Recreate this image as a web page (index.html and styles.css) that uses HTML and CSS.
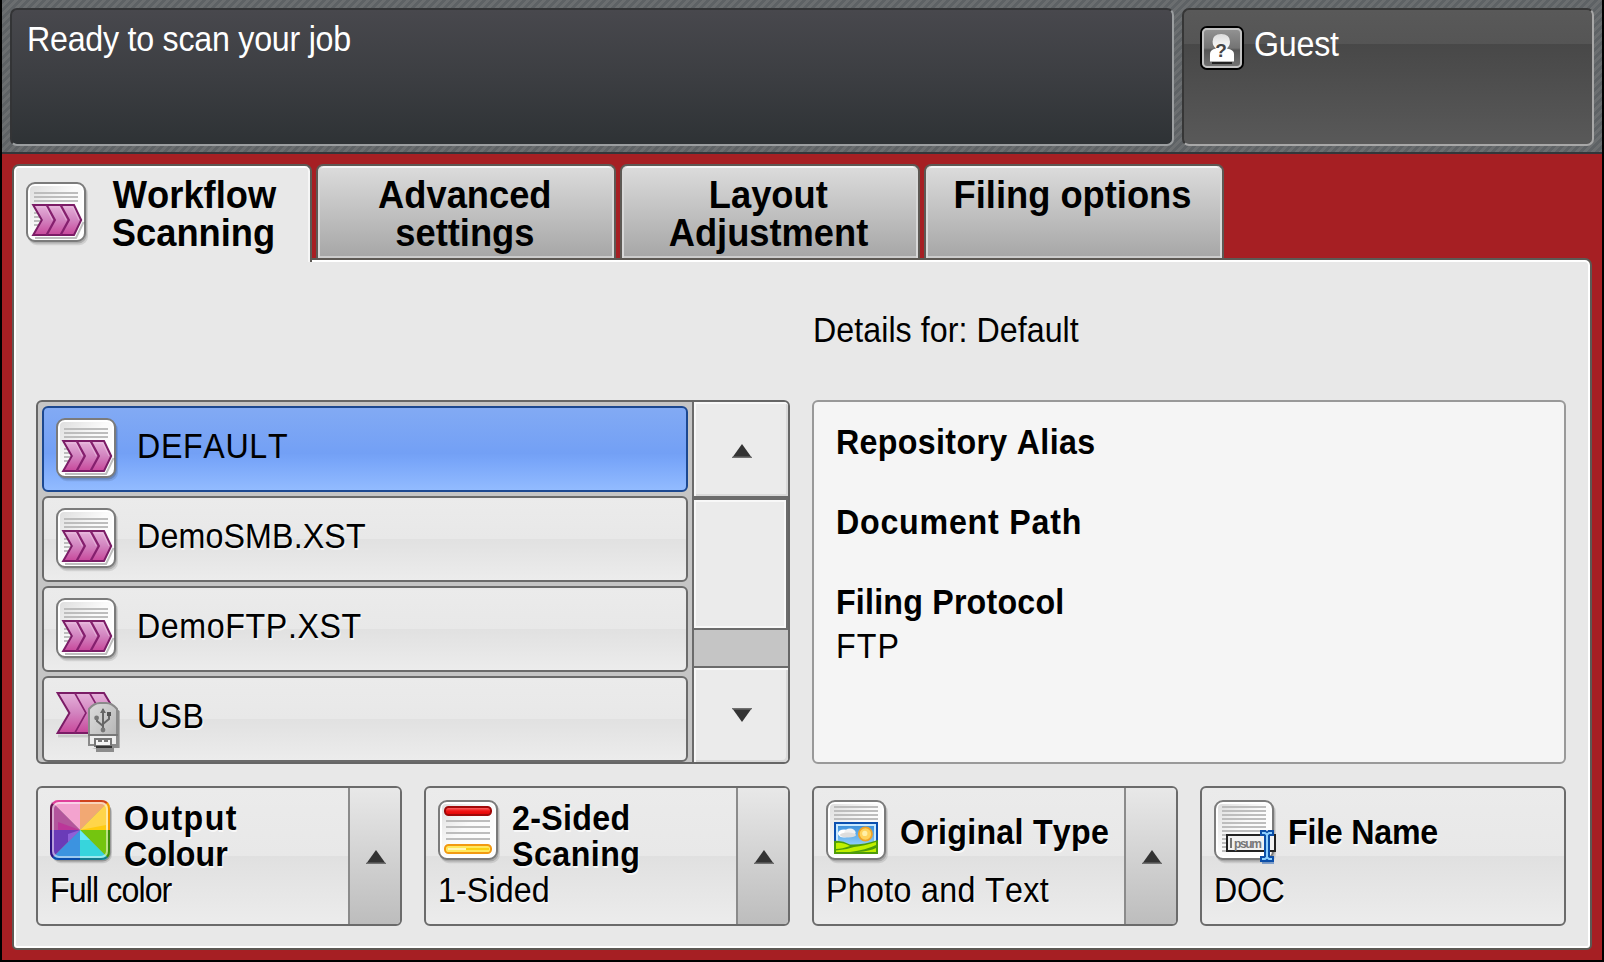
FILE: index.html
```html
<!DOCTYPE html>
<html lang="en">
<head>
<meta charset="utf-8">
<title>Workflow Scanning</title>
<link rel="stylesheet" href="styles.css">
</head>
<body>
<svg class="defs" width="0" height="0">
  <defs>
    <linearGradient id="paper" x1="0" y1="0" x2="1" y2="1"><stop offset="0" stop-color="#dedede"/><stop offset=".45" stop-color="#fafafa"/><stop offset="1" stop-color="#fff"/></linearGradient>
    <linearGradient id="pink" x1="0" y1="0" x2="0" y2="1"><stop offset="0" stop-color="#e5b2da"/><stop offset=".5" stop-color="#d283bf"/><stop offset="1" stop-color="#c8489b"/></linearGradient>
    <linearGradient id="red" x1="0" y1="0" x2="0" y2="1"><stop offset="0" stop-color="#ff7b7b"/><stop offset=".5" stop-color="#f01515"/><stop offset="1" stop-color="#e00000"/></linearGradient>
    <linearGradient id="metal" x1="0" y1="0" x2="1" y2="1"><stop offset="0" stop-color="#dcdcdc"/><stop offset=".5" stop-color="#c8c8c8"/><stop offset="1" stop-color="#b0b0b0"/></linearGradient>
    <linearGradient id="sky" x1="0" y1="0" x2="0" y2="1"><stop offset="0" stop-color="#3f92dc"/><stop offset="1" stop-color="#9dd8ff"/></linearGradient>
    <linearGradient id="badge" x1="0" y1="0" x2="0" y2="1"><stop offset="0" stop-color="#969696"/><stop offset=".5" stop-color="#747474"/><stop offset=".55" stop-color="#555"/><stop offset="1" stop-color="#777"/></linearGradient>
    <linearGradient id="person" x1="0" y1="0" x2="0" y2="1"><stop offset="0" stop-color="#dcdcdc"/><stop offset=".6" stop-color="#fff"/></linearGradient>
    <clipPath id="tile"><rect width="30" height="30" rx="4"/></clipPath>
    <g id="page">
      <rect x="1" y="1.6" width="30" height="30" rx="4.5" fill="#000" opacity=".1"/>
      <rect x=".8" y="1" width="29.6" height="29.8" rx="4.5" fill="#000" opacity=".16"/>
      <rect x=".5" y=".5" width="29" height="29" rx="4" fill="#fff" stroke="#7b7b7b"/>
      <rect x="2" y="2" width="26" height="26" rx="2" fill="url(#paper)"/>
    </g>
    <symbol id="workflow" viewBox="0 0 32 32">
      <use href="#page"/>
      <path d="M4 5.5H26M4 7.5H26M4 9.5H26M4 15.5H9M4 17.5H9M4 19.5H9M4 21.5H9" stroke="#bdbdbd"/>
      <path d="M4.5 28H25L28.8 20" fill="none" stroke="#000" opacity=".25"/>
      <path d="M3.6 11.5H24L27.6 19L24 26.5H3.6L7.9 19Z" fill="url(#pink)" stroke="#7b1c66"/>
      <path d="M10.3 11.5L14.4 19L10.3 26.5M17.3 11.5L21.4 19L17.3 26.5" fill="none" stroke="#85206e" stroke-width="1.15"/>
      <path d="M5.3 12.5H10L13.2 19M11.8 12.5H16.8L20.2 19M18.8 12.5H23.5L26.5 19" fill="none" stroke="#f0cbe8" stroke-width=".6" opacity=".5"/>
    </symbol>
    <symbol id="usb" viewBox="0 0 32 32">
      <path d="M1 22H17" stroke="#000" opacity=".12" stroke-width="1.4"/>
      <path d="M.8 .5H24L30 10.5L24 20.5H.8L6.7 10.5Z" fill="url(#pink)" stroke="#7b1c66"/>
      <path d="M9.4 .5L15 10.5L9.4 20.5M16.8 .5L22.6 10.5L17 20.5" fill="none" stroke="#85206e" stroke-width=".8"/>
      <path d="M18 28.200h2v1.800h9v-2h2.800V9.500L28 6.500v20" fill="#8c8c8c"/>
      <path d="M16.500 26.500V8.500Q19 5.500 22 5.500H25Q28 5.500 30.500 8.500V26.500Z" fill="url(#metal)" stroke="#8a8a8a"/>
      <rect x="17" y="22" width="13" height="4" fill="#eee"/>
      <path d="M16 21.500H31" stroke="#777"/>
      <path d="M19.500 23.500H27.500V27H19.500Z" fill="#f4f4f4" stroke="#777"/>
      <path d="M21 24.500H23M24 24.500H26" stroke="#777"/>
      <path d="M20 27.500H28" stroke="#333"/>
      <path d="M23.500 8.500V19.500M23.500 17L20.500 14.500V13M23.500 16L26.500 13.500V11" fill="none" stroke="#666"/>
      <path d="M22 10.500L23.500 8L25 10.500Z" fill="#666"/><rect x="25.500" y="10" width="2" height="2" fill="#555"/><circle cx="20.300" cy="13" r="1.200" fill="#777"/><circle cx="23.500" cy="19" r="1.200" fill="#777"/>
    </symbol>
    <symbol id="colour" viewBox="0 0 32 32">
      <rect x="1" y="1.600" width="30" height="30" rx="4.500" fill="#000" opacity=".12"/>
      <rect x=".8" y="1" width="29.800" height="29.800" rx="4.500" fill="#000" opacity=".25"/>
      <g clip-path="url(#tile)">
        <path d="M15 15V0H0Z" fill="#f3a3cf"/><path d="M15 15V0H30Z" fill="#f2a873"/>
        <path d="M15 15L30 0V15Z" fill="#ffd54a"/><path d="M15 15H30V30Z" fill="#74c50f"/>
        <path d="M15 15L30 30H15Z" fill="#37d5dc"/><path d="M15 15V30H0Z" fill="#3c93e0"/>
        <path d="M15 15L0 30V15Z" fill="#6a3bb8"/><path d="M15 15H0V0Z" fill="#b3559c"/>
        <path d="M15 15L4 15V11Z" fill="#c41a96" opacity=".5"/><path d="M15 15H28V12.500Z" fill="#ffc800" opacity=".8"/>
        <path d="M15 15L9 21V17Z" fill="#a678ee" opacity=".6"/><path d="M15 15L20 20H15Z" fill="#7ff4ff" opacity=".7"/>
      </g>
      <g fill="none">
        <path d="M.5 15V4.500Q.5 2.500 2 1.500" stroke="#65164f"/><path d="M1.500 2Q2.500 .5 4.500 .5H15" stroke="#e0409a"/>
        <path d="M15 .5H25.500Q27.500 .5 28.500 1.700" stroke="#d0431c"/><path d="M28.500 1.500Q29.500 2.500 29.500 4.500V15" stroke="#f39a00"/>
        <path d="M29.500 15V25.500Q29.500 27.500 28.500 28.500" stroke="#3c8a0c"/><path d="M28.500 28.500Q27.500 29.500 25.500 29.500H15" stroke="#167c8c"/>
        <path d="M15 29.500H4.500Q2.500 29.500 1.500 28.500" stroke="#0a4cab"/><path d="M1.500 28.500Q.5 27.500 .5 25.500V15" stroke="#2c1280"/>
        <rect x="1.500" y="1.500" width="27" height="27" rx="3" stroke="#fff" opacity=".5"/>
      </g>
    </symbol>
    <symbol id="sides" viewBox="0 0 32 32">
      <use href="#page"/>
      <path d="M4 10.500H26M4 13.500H26M4 16.500H26M4 19.500H26" stroke="#bdbdbd"/>
      <rect x="3.500" y="3.500" width="23" height="4" rx="1.800" fill="url(#red)" stroke="#a00808"/>
      <rect x="3.500" y="22.500" width="23" height="4" rx="1.800" fill="#ffe85e" stroke="#f29a12"/>
      <path d="M5 24.500H14" stroke="#fff7b8"/><path d="M14 24.500H25.500" stroke="#fbd215"/>
    </symbol>
    <symbol id="photo" viewBox="0 0 32 32">
      <use href="#page"/>
      <path d="M4 3.500H26M4 5.500H26M4 7.500H26M4 9.500H26" stroke="#bdbdbd"/>
      <rect x="4" y="11" width="22" height="16" fill="#0b50b0"/>
      <rect x="5" y="12" width="20" height="11" fill="#c8e9ff"/>
      <rect x="6" y="13" width="18" height="11" fill="url(#sky)"/>
      <path d="M4 20.500Q8 20 12 22.200Q18 22.600 26 20V27H4Z" fill="#4d9c0a"/>
      <path d="M5 21.500Q8 21 12 23Q8 24.500 5 24.500ZM14 23.500Q19 23 25 21V22.500Q20 25 12 26H5V25.300Q10 25 14 23.500ZM25 24V26H16Q22 25.600 25 24Z" fill="#c0f000"/>
      <ellipse cx="9" cy="16.700" rx="3" ry="2" fill="#fff"/><ellipse cx="12" cy="16.200" rx="2.800" ry="1.900" fill="#f1f1f1"/><ellipse cx="11" cy="17.500" rx="4" ry="1.300" fill="#ddd"/>
      <circle cx="19.700" cy="17" r="3.300" fill="#ffd35c" stroke="#eea32a" stroke-width=".9"/><circle cx="19.400" cy="16.700" r="1.300" fill="#fff0a8"/>
    </symbol>
    <symbol id="filename" viewBox="0 0 32 32">
      <use href="#page"/>
      <path d="M4 3.500H26M4 5.500H26M4 7.500H26M4 9.500H26M4 11.500H26M4 13.500H26M4 15.500H26M4 17.500H6M4 19.500H6M4 21.500H6M4 23.500H6M4 25.500H6" stroke="#bdbdbd"/>
      <rect x="6.500" y="17.500" width="24" height="8" fill="#f1f1f1" stroke="#222"/>
      <path d="M8.500 19V24" stroke="#555" stroke-width=".8"/>
      <text x="10" y="23.900" class="tiny" textLength="14">psum</text>
      <path d="M24 31.500H30" stroke="#0b50b0" opacity=".45"/>
      <path d="M23 15H26L26.500 15.800L27 15H30V18H28V28H30V31H23V28H25V18H23Z" fill="#0b4ea8"/>
      <path d="M24 16.500H25.500L26.500 17.300L27.500 16.500H29M26.500 17V29M24 29.500H25.500L26.500 28.700L27.500 29.500H29" stroke="#8ccfff" fill="none"/>
    </symbol>
    <symbol id="guest" viewBox="0 0 22 22">
      <rect x=".5" y=".5" width="21" height="21" rx="3" fill="url(#badge)" stroke="#000"/>
      <rect x="1.500" y="1.500" width="19" height="19" rx="2" fill="none" stroke="#c2c2c2"/>
      <path d="M6 18.500H16" stroke="#222"/>
      <path d="M5 17.800V14Q5 12 8 11.300Q6.300 10 6.300 7.800Q6.300 4 10.600 4T15 7.800Q15 10 13.400 11.300Q17 12 17 14V17.800Z" fill="url(#person)"/>
      <text x="10.500" y="15.300" class="question">?</text>
    </symbol>
    <symbol id="up" viewBox="0 0 10 7"><path d="M5 0L10 7H0Z" fill="#333"/><path d="M.3 6.600H9.700" stroke="#707070" stroke-width=".8"/></symbol>
    <symbol id="down" viewBox="0 0 10 7"><path d="M0 0H10L5 7Z" fill="#333"/><path d="M.3 .4H9.700" stroke="#707070" stroke-width=".8"/></symbol>
  </defs>
</svg>
<div class="screen">
  <header class="topbar">
    <div class="status"><span class="label ready">Ready to scan your job</span></div>
    <div class="user"><svg class="user-icon"><use href="#guest"/></svg><span class="label guest">Guest</span></div>
  </header>
  <main class="workspace">
    <nav class="tabs">
      <div class="tab active"><svg class="icon"><use href="#workflow"/></svg><div class="tab-text"><span>Workflow</span><span>Scanning</span></div></div>
      <div class="tab"><span>Advanced</span><span>settings</span></div>
      <div class="tab"><span>Layout</span><span>Adjustment</span></div>
      <div class="tab"><span>Filing options</span></div>
    </nav>
    <section class="panel">
      <div class="caption"><span class="label details-for">Details for: Default</span></div>
      <div class="columns">
        <div class="list">
          <div class="rows">
            <div class="row selected"><svg class="icon"><use href="#workflow"/></svg><span class="label r1">DEFAULT</span></div>
            <div class="row"><svg class="icon"><use href="#workflow"/></svg><span class="label r2">DemoSMB.XST</span></div>
            <div class="row"><svg class="icon"><use href="#workflow"/></svg><span class="label r3">DemoFTP.XST</span></div>
            <div class="row"><svg class="icon usb"><use href="#usb"/></svg><span class="label r4">USB</span></div>
          </div>
          <div class="scroller">
            <div class="scroll-button"><svg class="arrow"><use href="#up"/></svg></div>
            <div class="thumb"></div>
            <div class="track"></div>
            <div class="scroll-button last"><svg class="arrow"><use href="#down"/></svg></div>
          </div>
        </div>
        <div class="details">
          <div class="field"><span class="label strong d1">Repository Alias</span></div>
          <div class="field"><span class="label strong d2">Document Path</span></div>
          <div class="field"><span class="label strong d3">Filing Protocol</span><span class="label value ftp">FTP</span></div>
        </div>
      </div>
      <div class="options">
        <div class="option">
          <div class="option-main"><div class="option-head"><svg class="icon"><use href="#colour"/></svg><div class="option-title"><span class="label strong o1">Output</span><span class="label strong">Colour</span></div></div><span class="label full">Full color</span></div>
          <div class="option-more"><svg class="arrow"><use href="#up"/></svg></div>
        </div>
        <div class="option">
          <div class="option-main"><div class="option-head"><svg class="icon"><use href="#sides"/></svg><div class="option-title"><span class="label strong o3">2-Sided</span><span class="label strong o4">Scaning</span></div></div><span class="label one">1-Sided</span></div>
          <div class="option-more"><svg class="arrow"><use href="#up"/></svg></div>
        </div>
        <div class="option">
          <div class="option-main"><div class="option-head"><svg class="icon"><use href="#photo"/></svg><div class="option-title single"><span class="label strong o5">Original Type</span></div></div><span class="label pt">Photo and Text</span></div>
          <div class="option-more"><svg class="arrow"><use href="#up"/></svg></div>
        </div>
        <div class="option">
          <div class="option-main"><div class="option-head"><svg class="icon"><use href="#filename"/></svg><div class="option-title single"><span class="label strong o6">File Name</span></div></div><span class="label doc">DOC</span></div>
        </div>
      </div>
    </section>
  </main>
</div>
</body>
</html>
```

FILE: styles.css
```css
* { box-sizing: border-box; }
html { overflow: hidden; }
body { margin: 0; background: #000; font-family: "Liberation Sans", Arial, sans-serif; font-kerning: none; color: #000; }
.defs { position: absolute; }
.screen { width: 1604px; height: 962px; border: solid #000; border-width: 0 2px 2px; display: flex; flex-direction: column; overflow: hidden; background: #a61f23; }

.label { display: block; width: max-content; font-size: 35px; line-height: 36px; white-space: nowrap; transform: scaleX(.92); transform-origin: 0 50%; }
.strong { font-weight: bold; }
.icon { display: block; flex: none; width: 64px; height: 64px; margin-right: -4px; }
.arrow { display: block; width: 20px; height: 14px; }

/* Per-label tracking */
.ready { letter-spacing: -.27px; }
.guest { letter-spacing: -.25px; }
.details-for { letter-spacing: .05px; }
.r1 { letter-spacing: .7px; }
.r2 { letter-spacing: .15px; }
.r3 { letter-spacing: .65px; }
.r4 { letter-spacing: .4px; }
.d1 { letter-spacing: .36px; }
.d2 { letter-spacing: .83px; }
.d3 { letter-spacing: .22px; }
.ftp { letter-spacing: 1.2px; }
.o1 { letter-spacing: 1.5px; }
.o3 { letter-spacing: .35px; }
.o4 { letter-spacing: .5px; }
.o5 { letter-spacing: .28px; }
.o6 { letter-spacing: -.25px; }
.full { letter-spacing: -1px; }
.one { letter-spacing: .1px; }
.pt { letter-spacing: .36px; }
.doc { letter-spacing: -.4px; }

.topbar { height: 154px; flex: none; display: flex; gap: 8px; padding: 8px 8px 0; border-bottom: 2px solid #33363a; background: repeating-linear-gradient(135deg, #5e6265 0 2.83px, #6b6e70 2.83px 5.657px); color: #fff; }
.status, .user { height: 138px; border: 2px solid; border-color: #333436 #9b9ea0 #9b9ea0 #333436; border-radius: 7px; }
.status { width: 1164px; padding: 11px 15px; background: linear-gradient(#48484d, #3c3e42 50%, #2e3235); }
.user { width: 412px; padding: 16px; display: flex; background: linear-gradient(#595959 0, #555 34px, #484848 34px, #4c4c4c 60px, #595959); border-color: #363636 #a8a8a8 #a8a8a8 #363636; }
.user-icon { width: 44px; height: 44px; flex: none; margin-right: 10px; }
.question { font: bold 9.5px "Liberation Sans", sans-serif; text-anchor: middle; fill: #444; }
.tiny { font: bold 6px "Liberation Sans", sans-serif; fill: #777; }

.workspace { flex: 1; padding: 10px 10px 0; }
.tabs { display: flex; gap: 4px; height: 94px; }
.tab { width: 300px; height: 94px; padding: 10px 3px 0 0; border: 2px solid #5d5954; border-bottom: 0; border-radius: 7px 7px 0 0; background: linear-gradient(#dcdcdc, #a6a6a6); box-shadow: inset 2px 0 #d8d8d8, inset -2px 0 #d8d8d8, inset 0 2px #f4f4f4, inset 0 -2px #ccc; display: flex; flex-direction: column; align-items: center; font-size: 38px; line-height: 38px; font-weight: bold; }
.tab span { display: block; white-space: nowrap; transform: scaleX(.955); }
.tab.active { position: relative; z-index: 1; height: 98px; flex-direction: row; align-items: flex-start; padding-left: 12px; background: #e8e8e8; box-shadow: inset 2px 0 #fff, inset -2px 0 #f6f6f6, inset 0 2px #fff; }
.tab.active .icon { margin-top: 6px; }
.tab-text { width: 166px; margin-left: 25px; display: flex; flex-direction: column; align-items: center; }

.panel { width: 1580px; height: 692px; border: 2px solid #5d5954; border-radius: 0 7px 5px 5px; background: #e8e8e8; box-shadow: inset 0 0 0 2px #fff; padding: 52px 22px 0; }
.caption { height: 88px; padding-left: 777px; }
.columns { display: grid; grid-template-columns: 754px 754px; gap: 22px; height: 364px; }
.list { display: flex; border: 2px solid #666; border-radius: 6px; background: #c5c5c5; overflow: hidden; }
.rows { width: 654px; padding: 4px 4px 0; display: flex; flex-direction: column; gap: 4px; }
.row { flex: none; height: 86px; border: 2px solid #6b6b6b; border-radius: 6px; padding: 10px 12px; display: flex; background: linear-gradient(#ebebeb, #e8e8e8 50%, #e1e1e1 50%, #ececec); }
.row.selected { border-color: #1c4890; background: linear-gradient(#82aaf4, #73a0f5 55%, #79a6f9 65%, #92bbff); }
.row .label { margin: 10px 0 0 21px; }
.row:not(.selected) .label, .option .label { text-shadow: 1px 2px 0 rgba(255,255,255,.7); }
.row .usb { margin-top: 4px; }
.scroller { width: 96px; border-left: 2px solid #6b6b6b; display: flex; flex-direction: column; }
.scroll-button { height: 94px; flex: none; display: flex; justify-content: center; padding: 42px 0 0 2px; background: #ebebeb; box-shadow: inset 2px 2px #f8f8f8, inset -2px -2px #d9d9d9; border-radius: 0 4px 0 0; }
.scroll-button.last { padding-top: 40px; border-radius: 0 0 4px 0; }
.thumb { height: 134px; border: solid #6b6b6b; border-width: 4px 2px 2px 0; background: #ebebeb; box-shadow: inset 0 0 0 2px #f8f8f8; }
.track { height: 38px; border-bottom: 2px solid #6b6b6b; }
.details { border: 2px solid #999; border-radius: 6px; background: #f5f5f5; padding: 22px; }
.field { height: 80px; }
.field .value { margin-top: 8px; }

.options { display: grid; grid-template-columns: repeat(4, 366px); gap: 22px; margin-top: 22px; }
.option { height: 140px; display: flex; border: 2px solid #6b6b6b; border-radius: 6px; overflow: hidden; background: linear-gradient(#ebebeb, #e8e8e8 50%, #e0e0e0 50%, #ececec); }
.option-main { width: 310px; padding: 12px; }
.option-head { display: flex; height: 72px; }
.option-title { margin-left: 14px; }
.option-title.single { padding-top: 14px; }
.option-more { width: 52px; border-left: 2px solid #8b8b8b; padding: 62px 0 0 16px; background: linear-gradient(#e8e8e8, #bdbdbd); }
```
